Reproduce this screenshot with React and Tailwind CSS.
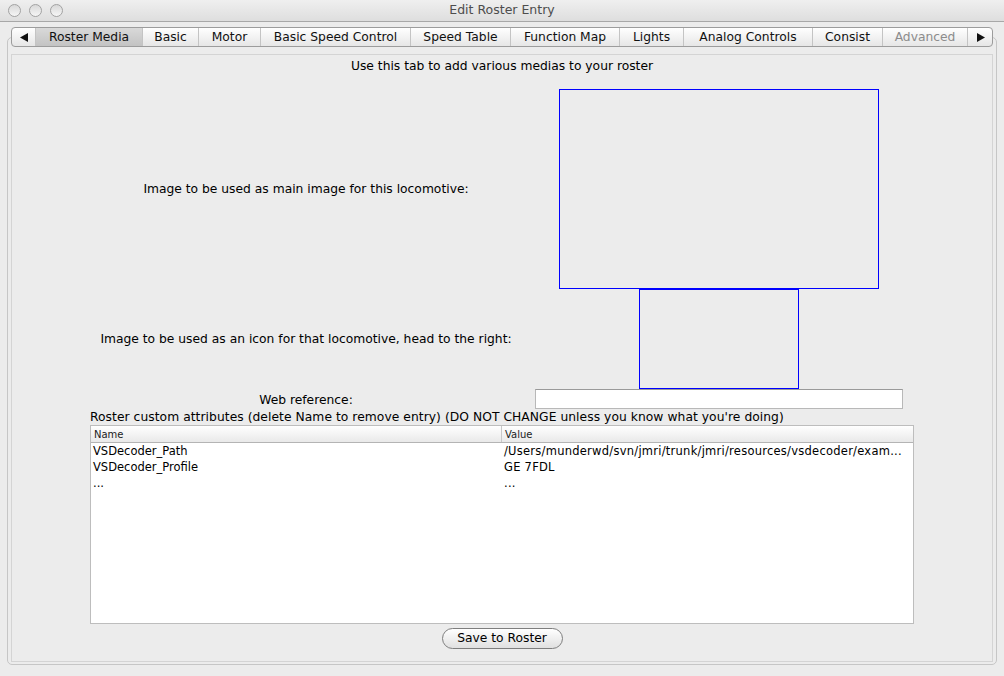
import React from 'react';

const tabs = [
    { label: 'Roster Media', w: 'w-[107px]', active: true },
    { label: 'Basic', w: 'w-[56px]' },
    { label: 'Motor', w: 'w-[62px]' },
    { label: 'Basic Speed Control', w: 'w-[150px]' },
    { label: 'Speed Table', w: 'w-[100px]' },
    { label: 'Function Map', w: 'w-[109px]' },
    { label: 'Lights', w: 'w-[64px]' },
    { label: 'Analog Controls', w: 'w-[129px]' },
    { label: 'Consist', w: 'w-[70px]' },
    { label: 'Advanced', w: 'w-[85px]', disabled: true },
];

const rows = [
    { name: 'VSDecoder_Path', value: '/Users/munderwd/svn/jmri/trunk/jmri/resources/vsdecoder/exam...' },
    { name: 'VSDecoder_Profile', value: 'GE 7FDL' },
    { name: '...', value: '...' },
];

const Light = () => (
    <div className="w-[13px] h-[13px] rounded-full border border-[#a2a2a2] bg-linear-to-b from-[#d8d8d8] to-[#f6f6f6]" />
);

const Arrow = ({ dir }) => (
    <svg width="9" height="9" viewBox="0 0 9 9">
        {dir === 'left'
            ? <polygon points="8,0 8,9 0,4.5" fill="#111" />
            : <polygon points="1,0 1,9 9,4.5" fill="#111" />}
    </svg>
);

export default function App() {
    return (
        <div className="w-[1004px] h-[676px] bg-[#ececec] flex flex-col overflow-hidden font-['DejaVu_Sans',sans-serif] text-[12.3px] text-black">
            {/* title bar */}
            <div className="h-[22px] flex items-center border-b border-[#a8a8a8] bg-linear-to-b from-[#efefef] to-[#dedede]">
                <div className="flex items-center gap-[8px] pl-[8px] w-[63px]">
                    <Light />
                    <Light />
                    <Light />
                </div>
                <div className="flex-1 text-center text-[12.5px] text-[#4d4d4d]">Edit Roster Entry</div>
                <div className="w-[63px]" />
            </div>

            {/* tabbed pane */}
            <div className="mx-[7px] mt-[15px] h-[628px] rounded-[5px] border border-[#c6c6c6] flex flex-col">
                <div className="-mt-[11px] mx-[3px] h-[20px] flex rounded-[4px] border border-[#9c9c9c] overflow-hidden bg-linear-to-b from-white to-[#e6e6e6]">
                    <div className="w-[23px] flex items-center justify-center pl-[1px]">
                        <Arrow dir="left" />
                    </div>
                    {tabs.map(t => (
                        <div
                            key={t.label}
                            className={`${t.w} flex items-center justify-center border-l border-[#c4c4c4] whitespace-nowrap ${t.active ? 'bg-linear-to-b from-[#d9d9d9] to-[#c3c3c3]' : ''} ${t.disabled ? 'text-[#8c8c8c]' : 'text-[#111]'}`}
                        >
                            {t.label}
                        </div>
                    ))}
                    <div className="w-[25px] flex items-center justify-center border-l border-[#c4c4c4]">
                        <Arrow dir="right" />
                    </div>
                </div>

                <div className="mx-[3px] mt-[7px] h-[608px] border border-[#d4d4d4] flex flex-col items-center">
                    <div className="mt-[4px] h-[15px] leading-[15px]">Use this tab to add various medias to your roster</div>

                    <div className="mt-[15px] w-full flex h-[200px]">
                        <div className="w-[588px] flex items-center justify-center">Image to be used as main image for this locomotive:</div>
                        <div className="w-[238px] flex justify-center">
                            <div className="shrink-0 w-[320px] h-[200px] border border-[#0000ff]" />
                        </div>
                    </div>

                    <div className="w-full flex h-[100px]">
                        <div className="w-[588px] flex items-center justify-center">Image to be used as an icon for that locomotive, head to the right:</div>
                        <div className="w-[238px] flex justify-center">
                            <div className="shrink-0 w-[160px] h-[100px] border border-[#0000ff]" />
                        </div>
                    </div>

                    <div className="w-full flex h-[20px]">
                        <div className="w-[588px] flex items-center justify-center pt-[2px]">Web reference:</div>
                        <div className="w-[238px] flex justify-center">
                            <div className="shrink-0 w-[368px] h-[20px] bg-white border border-[#b8b8b8] border-t-[#9a9a9a]" />
                        </div>
                    </div>

                    <div className="w-[824px] h-[16px] flex items-center whitespace-nowrap tracking-[0.05px]">
                        Roster custom attributes (delete Name to remove entry) (DO NOT CHANGE unless you know what you're doing)
                    </div>

                    <div className="w-[824px] h-[199px] border border-[#bdbdbd] bg-white flex flex-col">
                        <div className="h-[17px] flex border-b border-[#b4b4b4] bg-linear-to-b from-white to-[#e9e9e9] text-[10px] text-[#222]">
                            <div className="w-[410px] flex items-center pl-[3px]">Name</div>
                            <div className="flex-1 flex items-center pl-[3px] border-l border-[#c8c8c8]">Value</div>
                        </div>
                        <div className="pt-[1px] flex flex-col">
                            {rows.map(r => (
                                <div key={r.name} className="h-[16px] flex items-center text-[11.5px] whitespace-nowrap">
                                    <div className="w-[410px] pl-[2px]">{r.name}</div>
                                    <div className="flex-1 pl-[3px] tracking-[0.25px]">{r.value}</div>
                                </div>
                            ))}
                        </div>
                    </div>

                    <button className="mt-[4px] w-[121px] h-[21px] rounded-full border border-[#7e7e7e] bg-linear-to-b from-white to-[#e0e0e0] text-[12.3px] text-black">
                        Save to Roster
                    </button>
                </div>
            </div>
        </div>
    );
}
